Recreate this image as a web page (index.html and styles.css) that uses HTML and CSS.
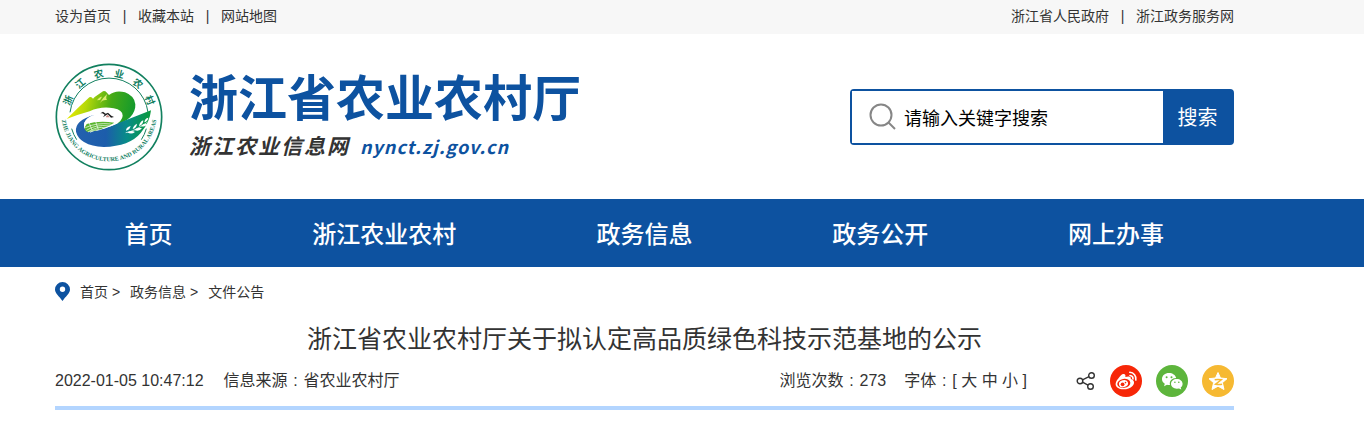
FILE: index.html
```html
<!DOCTYPE html>
<html lang="zh-CN">
<head>
<meta charset="utf-8">
<meta name="viewport" content="width=device-width, initial-scale=1">
<title>浙江省农业农村厅</title>
<link rel="stylesheet" href="styles.css">
</head>
<body>
<div class="topbar">
  <div class="wrap topbar-row">
    <div class="links"><a href="#">设为首页</a><span class="sep">|</span><a href="#">收藏本站</a><span class="sep">|</span><a href="#">网站地图</a></div>
    <div class="links"><a href="#">浙江省人民政府</a><span class="sep">|</span><a href="#">浙江政务服务网</a></div>
  </div>
</div>
<header class="wrap header">
  <a class="brand" href="#">
    <svg class="emblem" viewBox="46 39 324 324" aria-hidden="true">
      <defs>
        <linearGradient id="hill" x1="0" x2="1" y1="0.2" y2="0.3"><stop offset="0" stop-color="#f3ee00"/><stop offset=".3" stop-color="#b5d80a"/><stop offset=".65" stop-color="#45aa16"/><stop offset="1" stop-color="#159a2c"/></linearGradient>
        <linearGradient id="river" x1="0" x2="1"><stop offset="0" stop-color="#2461ae"/><stop offset=".4" stop-color="#1c5dab"/><stop offset=".68" stop-color="#088c88"/><stop offset="1" stop-color="#0a9a3b"/></linearGradient>
        <path id="arc-top" d="M86 201A122 122 0 0 1 330 201"/>
        <path id="arc-bottom" d="M65 191A143 143 0 1 0 351 191"/>
      </defs>
      <circle cx="208" cy="201" r="158" fill="#fff" stroke="#12805f" stroke-width="5"/>
      <path d="M91 187A118 118 0 0 1 325 187M96 236Q101 254 111 269M320 236Q315 254 305 269" fill="none" stroke="#12805f" stroke-width="3"/>
      <text class="emblem-cn" text-anchor="middle"><textPath href="#arc-top" startOffset="50%">浙 江 农 业 农 村</textPath></text>
      <text class="emblem-en" text-anchor="middle"><textPath href="#arc-bottom" startOffset="50%">ZHE JIANG AGRICULTURE AND RURAL AREAS</textPath></text>
      <path d="M81 207Q112 176 149 142Q155 138 160 146L165 141L190 124Q197 121 203 130L208 135Q228 119 256 127Q285 138 287 163C289 191 265 218 224 225Q248 214 249 197Q249 180 222 175Q184 168 150 184Q117 193 81 207Z" fill="url(#hill)"/>
      <path d="M180 160Q190 142 203 131Q197 144 202 150Q188 148 180 160M172 151Q180 139 187 140L181 150Z" fill="#ddeb73"/>
      <path d="M165 194Q141 201 134 218Q129 234 145 246Q190 241 235 220L334 181Q331 216 303 249Q270 289 192 291Q119 286 109 245Q104 211 165 194Z" fill="url(#river)"/>
      <path d="M165 194Q141 201 134 218Q129 234 145 246Q190 241 235 220Q205 209 151 212Q150 201 165 194Z" fill="#fff"/>
      <path d="M141 222Q176 211 224 218Q187 241 144 246Q128 240 141 222Z" fill="#58b52c"/>
      <path d="M137 233Q170 217 213 222M140 241Q169 222 208 228M145 246Q174 227 198 234M151 247Q168 236 179 240M148 217L158 243M168 215L176 239" fill="none" stroke="#fff" stroke-width="2"/>
      <path d="M182 190L190 185L198 191L205 188L215 197L223 201L214 203L204 193L190 202L195 194L188 190Z" fill="#222"/>
      <path d="M200 198L204 195L210 202H199Z" fill="#cc8580"/>
      <path d="M258 248Q281 246 324 216" fill="none" stroke="#fff" stroke-width="2"/>
      <path d="M259 242Q259 231 273 228Q270 240 259 242M279 237Q281 226 292 221Q291 234 279 237M298 229Q300 215 311 211Q311 223 298 229M314 217Q315 205 326 203Q325 213 314 217M263 247Q276 239 286 246Q275 255 263 247M284 240Q295 230 307 235Q298 246 284 240M304 228Q312 219 323 222Q315 233 304 228Z" fill="#fff"/>
    </svg>
    <span class="brand-text">
      <span class="brand-name">浙江省农业农村厅</span>
      <span class="brand-sub"><span>浙江农业信息网</span><span class="brand-url">nynct.zj.gov.cn</span></span>
    </span>
  </a>
  <form class="search">
    <label for="q" class="search-icon" aria-label="搜索关键字">
      <svg viewBox="0 0 27 27" width="27" height="27" fill="none" stroke="#868686" stroke-width="2"><circle cx="12" cy="12" r="10.5"/><path d="M19.5 19.5L26 26"/></svg>
    </label>
    <input id="q" type="text" value="请输入关键字搜索">
    <button type="button">搜索</button>
  </form>
</header>
<nav class="nav">
  <div class="wrap nav-row">
    <a href="#">首页</a><a href="#">浙江农业农村</a><a href="#">政务信息</a><a href="#">政务公开</a><a href="#">网上办事</a>
  </div>
</nav>
<main class="wrap">
  <div class="crumbs">
    <svg class="pin" viewBox="0 0 15 19" width="15" height="19" aria-hidden="true"><path fill="#0d52a0" fill-rule="evenodd" d="M7.5 0A7.5 7.5 0 0 0 0 7.500C0 11.500 4.500 14.500 7.500 19C10.500 14.500 15 11.500 15 7.500A7.500 7.500 0 0 0 7.500 0ZM7.500 4.600A2.700 2.700 0 1 1 7.500 10A2.700 2.700 0 0 1 7.500 4.600Z"/></svg>
    <span><a href="#">首页</a> &gt;</span><span><a href="#">政务信息</a> &gt;</span><a href="#">文件公告</a>
  </div>
  <h1>浙江省农业农村厅关于拟认定高品质绿色科技示范基地的公示</h1>
  <div class="meta">
    <time datetime="2022-01-05T10:47:12">2022-01-05 10:47:12</time>
    <span class="source">信息来源<span class="colon">:</span>省农业农村厅</span>
    <span class="views">浏览次数<span class="colon">:</span>273</span>
    <span class="sizes">字体<span class="colon">:</span>[ <a href="#">大</a> <a href="#">中</a> <a href="#">小</a> ]</span>
    <div class="share">
      <a href="#" aria-label="分享"><svg viewBox="0 0 20 20" width="20" height="20" fill="none" stroke="#333" stroke-width="1.400"><circle cx="4" cy="10" r="2.800"/><circle cx="15.500" cy="4.500" r="2.800"/><circle cx="14.500" cy="15.500" r="2.800"/><path d="M6.500 8.800L13 5.700M6.500 11.200L12 14.200"/></svg></a>
      <a href="#" aria-label="微博"><svg viewBox="0 0 32 32" width="32" height="32"><circle cx="16" cy="16" r="16" fill="#f72708"/><path fill="#fff" d="M13 9C15 8.500 16 10 15.300 12C19 10.700 21.500 11.500 20.800 14C24.500 15 25 18.500 22.500 21C19 24.800 11 25.500 7.300 22.500C4.500 20 5.500 16.500 8.500 13.200C10 11 11.500 9.500 13 9Z"/><ellipse cx="13.800" cy="18.400" rx="6.600" ry="4.500" fill="#f72708" transform="rotate(-8 13.800 18.400)"/><ellipse cx="13.500" cy="18.700" rx="4.600" ry="3.500" fill="#fff" transform="rotate(-15 13.500 18.700)"/><circle cx="12.600" cy="19.300" r="1.900" fill="#f72708"/><circle cx="15.500" cy="17.600" r=".8" fill="#f72708"/><path d="M19.800 7.300A6.500 6.500 0 0 1 25.800 15M20 10.500A3.300 3.300 0 0 1 23 14" fill="none" stroke="#fff" stroke-width="1.600" stroke-linecap="round"/></svg></a>
      <a href="#" aria-label="微信"><svg viewBox="0 0 32 32" width="32" height="32"><circle cx="16" cy="16" r="16" fill="#5db53c"/><path fill="#fff" d="M13 8C9 8 6 10.600 6 14C6 16 7 17.700 8.800 18.800L8 21.300L11 19.800Q12.500 20.200 14 20C13 16 16 13 20.200 13C19.500 10 16.500 8 13 8Z"/><path fill="#fff" d="M20.800 13.900C17.500 13.900 15 16 15 18.800C15 21.600 17.500 23.700 20.800 23.700L23 23.400L25.300 24.600L24.700 22.600C26 21.700 26.600 20.300 26.600 18.800C26.600 16 24 13.900 20.800 13.900Z"/><g fill="#5db53c"><circle cx="10.600" cy="12.200" r="1"/><circle cx="15.500" cy="12.200" r="1"/><circle cx="18.900" cy="17.200" r=".8"/><circle cx="22.800" cy="17.200" r=".8"/></g></svg></a>
      <a href="#" aria-label="QQ空间"><svg viewBox="0 0 32 32" width="32" height="32"><circle cx="16" cy="16" r="16" fill="#f6b932"/><path fill="#fff" stroke="#fff" stroke-linejoin="round" d="M16 7.500L18.500 13L25 13.700L20.400 17.700L22 24.500L16 21.200L10 24.500L11.600 17.700L7 13.700L13.500 13Z"/><path d="M12.700 14.800Q16 14.200 19.300 14.800L13.600 19.200Q17 20 20 19.200" fill="none" stroke="#f6b932" stroke-width="1.500"/></svg></a>
    </div>
  </div>
</main>
</body>
</html>
```
FILE: styles.css
```css
* { box-sizing: border-box; }
body {
  margin: 0;
  background: #fff;
  color: #333;
  font-family: "Liberation Sans", "Noto Sans CJK SC", sans-serif;
}
a { color: inherit; text-decoration: none; }
svg { display: block; flex: none; }
.wrap { max-width: 1234px; padding-left: 55px; }

.topbar { background: #f7f7f7; font-size: 14px; line-height: 34px; }
.topbar-row, .links { display: flex; justify-content: space-between; }
.links { height: 34px; line-height: 32px; }
.sep { width: 27px; text-align: center; }

.header { display: flex; justify-content: space-between; align-items: center; height: 165px; }
.brand { display: flex; align-items: center; gap: 26px; }
.emblem { width: 108px; height: 108px; }
.emblem-cn { font: bold 29px "Noto Sans CJK SC", sans-serif; word-spacing: 22px; fill: #12805f; }
.emblem-en { font: bold 18px "Liberation Serif", serif; fill: #12805f; }
.brand-text { display: flex; flex-direction: column; padding-bottom: 2px; font-family: "Noto Sans CJK SC", sans-serif; font-weight: 700; }
.brand-name { color: #0d52a0; font-size: 49px; line-height: 60px; }
.brand-sub { display: flex; align-items: baseline; gap: 10px; font-size: 21px; line-height: 40px; font-style: italic; letter-spacing: 2px; }
.brand-url { color: #0d52a0; font-size: 18px; letter-spacing: 1px; }

.search { display: flex; width: 384px; height: 56px; border: 2px solid #0d52a0; border-radius: 4px; background: #0d52a0; }
.search-icon { display: flex; align-items: center; padding-left: 17px; background: #fff; }
.search input { flex: 1; min-width: 0; padding: 0 8px; border: 0; color: #000; background: #fff; font: 18px "Liberation Sans", "Noto Sans CJK SC", sans-serif; }
.search button { width: 69px; padding: 0; border: 0; color: #fff; background: #0d52a0; font: 20px "Liberation Sans", "Noto Sans CJK SC", sans-serif; }

.nav { padding-top: 4px; background: #0d52a0; color: #fff; font-size: 24px; font-weight: 500; line-height: 64px; }
.nav-row { display: grid; grid-template-columns: 187fr 285fr 236fr 236fr 236fr; text-align: center; }

.crumbs { display: flex; align-items: center; gap: 10px; height: 48px; font-size: 14px; }
h1 { margin: 0; text-align: center; font-size: 25px; font-weight: 400; line-height: 48px; }
.meta { display: flex; align-items: center; height: 47px; padding-bottom: 8px; border-bottom: 4px solid #b3d5ff; font-size: 16px; line-height: 24px; }
.colon { display: inline-block; width: 16px; text-align: center; }
.source { margin-left: 20px; }
.views { margin-left: auto; }
.sizes { margin-left: 18px; }
.share { display: flex; align-items: center; gap: 14px; margin-left: 49px; }
```
